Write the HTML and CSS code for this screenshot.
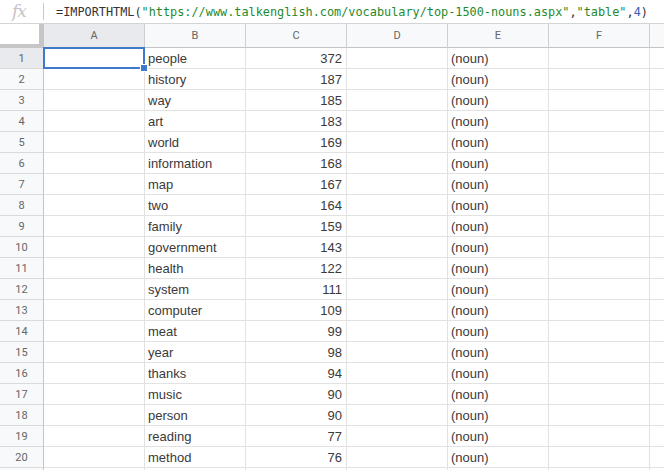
FILE: index.html
```html
<!DOCTYPE html>
<html>
<head>
<meta charset="utf-8">
<link rel="stylesheet" href="styles.css">
</head>
<body>
<div class="formula-bar">
  <span class="fx">fx</span>
  <span class="sep"></span>
  <span class="formula"><span class="fn">=IMPORTHTML(</span><span class="str">"https://www.talkenglish.com/vocabulary/top-1500-nouns.aspx"</span><span class="fn">,</span><span class="str">"table"</span><span class="fn">,</span><span class="num">4</span><span class="fn">)</span></span>
</div>
<div class="grid" id="grid">
  <div class="corner"></div>
  <div class="colhead sel">A</div>
  <div class="colhead">B</div>
  <div class="colhead">C</div>
  <div class="colhead">D</div>
  <div class="colhead">E</div>
  <div class="colhead">F</div>
  <div class="colhead last"></div>
</div>
<script src="script.js"></script>
</body>
</html>
```

FILE: script.js
```js
var data = [
  ["people", 372], ["history", 187], ["way", 185], ["art", 183], ["world", 169],
  ["information", 168], ["map", 167], ["two", 164], ["family", 159], ["government", 143],
  ["health", 122], ["system", 111], ["computer", 109], ["meat", 99], ["year", 98],
  ["thanks", 94], ["music", 90], ["person", 90], ["reading", 77], ["method", 76],
  null
];
var grid = document.getElementById("grid");
data.forEach(function (r, i) {
  var cells = [];
  var rh = document.createElement("div");
  rh.className = "rowhead" + (i === 0 ? " sel" : "");
  rh.textContent = r ? i + 1 : "";
  cells.push(rh);
  var a = document.createElement("div");
  a.className = "cell" + (i === 0 ? " active" : "");
  cells.push(a);
  var b = document.createElement("div");
  b.className = "cell";
  b.textContent = r ? r[0] : "";
  cells.push(b);
  var c = document.createElement("div");
  c.className = "cell right";
  c.textContent = r ? r[1] : "";
  cells.push(c);
  var d = document.createElement("div");
  d.className = "cell";
  cells.push(d);
  var e = document.createElement("div");
  e.className = "cell";
  e.textContent = r ? "(noun)" : "";
  cells.push(e);
  var f = document.createElement("div");
  f.className = "cell";
  cells.push(f);
  var g = document.createElement("div");
  g.className = "cell last";
  cells.push(g);
  cells.forEach(function (x) { grid.appendChild(x); });
});
```

FILE: styles.css
```css
html, body {
  margin: 0;
  padding: 0;
  background: #ffffff;
  overflow: hidden;
}
body {
  width: 664px;
  height: 470px;
  font-family: "Liberation Sans", Arial, sans-serif;
}
.formula-bar {
  height: 23px;
  border-bottom: 1px solid #d4d4d4;
  display: flex;
  align-items: center;
  box-sizing: content-box;
}
.fx {
  width: 43px;
  padding-left: 12px;
  box-sizing: border-box;
  font-family: "DejaVu Serif", serif;
  font-style: italic;
  font-size: 17px;
  color: #c4c4c4;
  line-height: 23px;
  letter-spacing: -1px;
}
.sep {
  width: 1px;
  height: 17px;
  background: #c8c8c8;
  margin-right: 12px;
}
.formula {
  font-family: "DejaVu Sans Mono", monospace;
  font-size: 11.85px;
  white-space: nowrap;
  line-height: 23px;
  padding-top: 1px;
}
.fn { color: #333333; }
.str { color: #1e8a2e; }
.num { color: #2f5fb8; }

.grid {
  display: grid;
  grid-template-columns: 44px repeat(6, 101px) 1fr;
  grid-template-rows: 24px;
  grid-auto-rows: 21px;
}
.corner {
  background: #ffffff;
  border-right: 5px solid #c6c6c6;
  border-bottom: 4px solid #c6c6c6;
}
.colhead {
  background: #f8f9fa;
  border-right: 1px solid #cfcfcf;
  border-bottom: 1px solid #c4c4c4;
  font-family: Roboto, "Liberation Sans", sans-serif;
  font-size: 11px;
  color: #666666;
  display: flex;
  align-items: center;
  justify-content: center;
}
.colhead.sel { background: #e8eaed; }
.colhead.last { border-right: none; }
.rowhead {
  background: #f8f9fa;
  border-right: 1px solid #c4c4c4;
  border-bottom: 1px solid #dadada;
  font-family: Roboto, "Liberation Sans", sans-serif;
  font-size: 11px;
  color: #666666;
  display: flex;
  align-items: center;
  justify-content: center;
  padding-top: 1px;
  box-sizing: border-box;
}
.rowhead.sel { background: #e8eaed; }
.cell {
  border-right: 1px solid #e2e2e2;
  border-bottom: 1px solid #e2e2e2;
  font-size: 13px;
  color: #3a3a3a;
  line-height: 20px;
  padding: 1px 3px 0;
  box-sizing: border-box;
  white-space: nowrap;
  overflow: hidden;
}
.cell.right { text-align: right; padding-right: 4px; }
.cell.last { border-right: none; }
.cell.active {
  position: relative;
  overflow: visible;
}
.cell.active::after {
  content: "";
  position: absolute;
  left: -1px;
  top: -1px;
  right: -1px;
  bottom: -1px;
  border: 2px solid #3f79c9;
}
.cell.active::before {
  content: "";
  position: absolute;
  right: -4px;
  bottom: -4px;
  width: 6px;
  height: 6px;
  background: #3f79c9;
  border: 1px solid #ffffff;
  z-index: 2;
}
```
